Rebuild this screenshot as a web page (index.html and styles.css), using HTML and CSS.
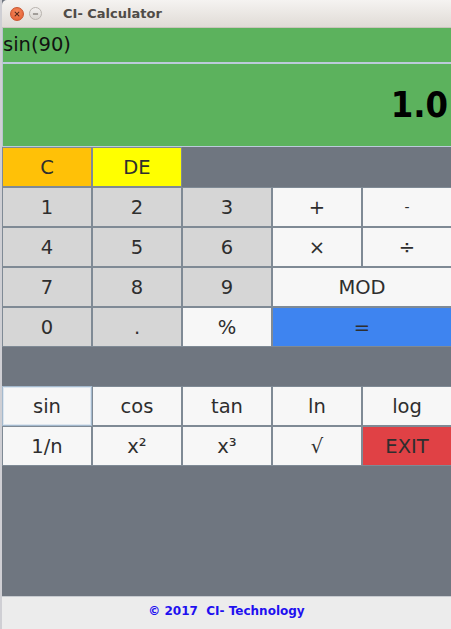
FILE: index.html
```html
<!DOCTYPE html>
<html>
<head>
<meta charset="utf-8">
<title>CI- Calculator</title>
<link rel="stylesheet" href="styles.css">
</head>
<body>
<div class="desktop">
  <div class="window">
    <div class="titlebar">
      <span class="wbtn close">
        <svg width="14" height="14" viewBox="0 0 14 14"><path d="M4.8 4.8 L9.2 9.2 M9.2 4.8 L4.8 9.2" stroke="#5a2a1a" stroke-width="1.3" stroke-linecap="round"/></svg>
      </span>
      <span class="wbtn minimize">
        <svg width="12" height="12" viewBox="0 0 12 12"><path d="M3.2 6 H8.8" stroke="#6a6560" stroke-width="1.2"/></svg>
      </span>
      <span class="wtitle">CI- Calculator</span>
    </div>
    <div class="input">sin(90)</div>
    <div class="display">1.0</div>
    <div class="keypad">
      <button class="key amber">C</button>
      <button class="key yellow">DE</button>
      <div class="blank"></div>
      <button class="key digit">1</button>
      <button class="key digit">2</button>
      <button class="key digit">3</button>
      <button class="key light">+</button>
      <button class="key light small">-</button>
      <button class="key digit">4</button>
      <button class="key digit">5</button>
      <button class="key digit">6</button>
      <button class="key light">×</button>
      <button class="key light">÷</button>
      <button class="key digit">7</button>
      <button class="key digit">8</button>
      <button class="key digit">9</button>
      <button class="key light wide">MOD</button>
      <button class="key digit">0</button>
      <button class="key digit">.</button>
      <button class="key light">%</button>
      <button class="key blue wide">=</button>
    </div>
    <div class="keypad sci">
      <button class="key light focus">sin</button>
      <button class="key light">cos</button>
      <button class="key light">tan</button>
      <button class="key light">ln</button>
      <button class="key light">log</button>
      <button class="key light">1/n</button>
      <button class="key light">x²</button>
      <button class="key light">x³</button>
      <button class="key light">√</button>
      <button class="key red">EXIT</button>
    </div>
    <div class="spacer"></div>
    <div class="footer">© 2017&nbsp; CI- Technology</div>
  </div>
</div>
</body>
</html>
```

FILE: styles.css
```css
* { box-sizing: border-box; }
html, body { margin: 0; padding: 0; }
body {
  width: 451px;
  height: 629px;
  overflow: hidden;
  background: #cfcfd4;
  font-family: "DejaVu Sans", sans-serif;
}
.desktop {
  display: flex;
  height: 629px;
  padding-left: 2px;
}
.window {
  flex: 1;
  display: flex;
  flex-direction: column;
  background: #6f7680;
  height: 629px;
  overflow: hidden;
}
.titlebar {
  height: 28px;
  display: flex;
  align-items: center;
  background: linear-gradient(#f5f3f1, #e0dbd6);
  border-bottom: 1px solid #cbc4bd;
  border-top-left-radius: 5px;
  padding-left: 8px;
  flex-shrink: 0;
}
.wbtn {
  display: flex;
  align-items: center;
  justify-content: center;
  border-radius: 50%;
}
.close {
  width: 14px;
  height: 14px;
  background: radial-gradient(circle at 50% 35%, #f58a5e, #e2582c);
  border: 1px solid #c9552f;
}
.minimize {
  width: 13px;
  height: 13px;
  margin-left: 5px;
  background: linear-gradient(#f2f0ee, #d9d5d1);
  border: 1px solid #b8b3ae;
}
.wtitle {
  margin-left: 21px;
  font-weight: bold;
  font-size: 13px;
  color: #4f4b47;
}
.input {
  height: 36px;
  background: #5cb25d;
  border-left: 1px solid #b9c4cf;
  border-bottom: 2px solid #bccbdb;
  font-size: 19.5px;
  color: #111;
  line-height: 34px;
  padding-left: 0;
  flex-shrink: 0;
}
.display {
  height: 83px;
  background: #5cb25d;
  border-left: 1px solid #b9c4cf;
  border-bottom: 1px solid #bccbdb;
  font-family: "DejaVu Sans Condensed", "DejaVu Sans", sans-serif;
  font-stretch: condensed;
  font-weight: bold;
  font-size: 36px;
  color: #000;
  text-align: right;
  line-height: 82px;
  padding-right: 3px;
  flex-shrink: 0;
}
.keypad {
  display: grid;
  grid-template-columns: repeat(5, 90px);
  grid-auto-rows: 40px;
  width: 450px;
  flex-shrink: 0;
}
.blank { grid-column: span 3; }
.sci { margin-top: 39px; }
.key {
  margin: 0;
  padding: 0;
  border: 1px solid #7f8a95;
  font-family: "DejaVu Sans", sans-serif;
  font-size: 19.5px;
  color: #2e2e2e;
  display: flex;
  align-items: center;
  justify-content: center;
}
.wide { grid-column: span 2; }
.amber { background: #ffc107; }
.yellow { background: #ffff00; }
.digit { background: #d6d6d6; }
.light { background: #f7f7f7; }
.blue { background: #3e84f0; }
.red { background: #e04145; }
.small { font-size: 14px; }
.focus {
  border-color: #a4b9cd;
  box-shadow: inset 0 0 0 1px #dde6ef;
}
.spacer { flex: 1; }
.footer {
  height: 33px;
  flex-shrink: 0;
  background: #ececec;
  border-top: 1px solid #c7cbd0;
  color: #1f10f0;
  font-weight: bold;
  font-size: 12px;
  text-align: center;
  line-height: 28px;
}
```
